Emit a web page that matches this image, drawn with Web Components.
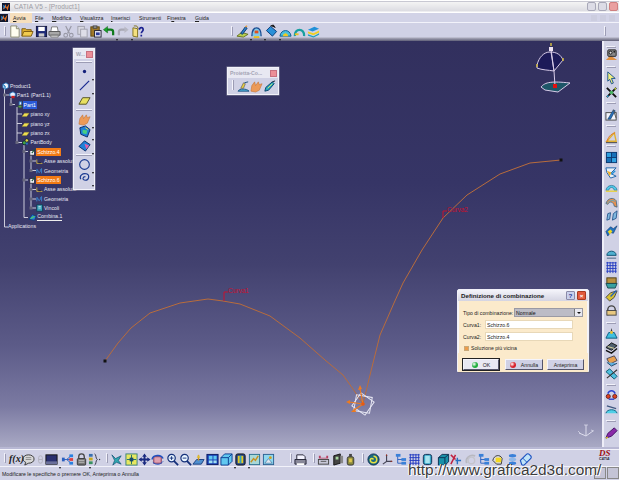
<!DOCTYPE html>
<html lang="it">

<head>
	<meta charset="UTF-8">
	<title>CATIA V5 - [Product1]</title>
	<style>
		html, body { margin: 0; padding: 0; background: #d0d1e5; }
		body { font: 5.2px "Liberation Sans", Arial, sans-serif; overflow: hidden; }
	</style>
</head>

<body>
	<cat-app></cat-app>
	<template id="app-content">
		<cat-viewport slot="viewport">
			<cat-tree></cat-tree>
			<cat-palette heading="W..." style="left:73px;top:7px;width:22px" items="point:72:d line:86:d plane:101 hand:120:d cubeA:132:d cubeB:146:d circle:165:d spiral:178:d" seps="62 110 155" vertical></cat-palette>
			<cat-palette heading="Proietta-Co..." style="left:227px;top:26px;width:52px" items="projA:243 hand:256 needle:269"></cat-palette>
			<cat-dialog heading="Definizione di combinazione" style="left:457px;top:248px">
				<cat-field label="Tipo di combinazione:" value="Normale" select></cat-field>
				<cat-field label="Curva1:" value="Schizzo.6"></cat-field>
				<cat-field label="Curva2:" value="Schizzo.4"></cat-field>
				<cat-check label="Soluzione più vicina"></cat-check>
				<div slot="buttons" style="display:contents">
					<cat-button led="#1fae3c" style="width:36px" focused>OK</cat-button>
					<cat-button led="#d8202a" style="width:38px;margin-left:6px">Annulla</cat-button>
					<cat-button style="width:37px;margin-left:4px">Anteprima</cat-button>
				</div>
			</cat-dialog>
		</cat-viewport>
	</template>

	<script>
		const ICONS = {
			new: `<path d="M3 1h6l3 3v9H3z" fill="#fffef0" stroke="#8a8a70"/><path d="M9 1v3h3" fill="#ddd" stroke="#8a8a70"/>`,
			open: `<path d="M1 12V4h4l1 1h5v2" fill="#e0b030" stroke="#7a5a10"/><path d="M1 12l2-5h10l-2 5z" fill="#f2cc50" stroke="#7a5a10"/>`,
			save: `<rect x="1.500" y="1.500" width="11" height="11" fill="#1e2a78" stroke="#10143c"/><rect x="3.500" y="2" width="7" height="4.500" fill="#fff"/><rect x="4" y="9" width="6" height="3.500" fill="#ccc"/>`,
			print: `<path d="M3 7l1-5h6l1 5" fill="#fff" stroke="#777"/><path d="M1 7h12v4H1z" fill="#a8a8a8" stroke="#555"/><path d="M3 11h8v2H3z" fill="#eee" stroke="#777"/>`,
			cut: `<path d="M4 1l4 8M10 1L6 9" stroke="#9a9aa8" stroke-width="1.300" fill="none"/><circle cx="4" cy="11" r="2" fill="none" stroke="#9a9aa8" stroke-width="1.200"/><circle cx="10" cy="11" r="2" fill="none" stroke="#9a9aa8" stroke-width="1.200"/>`,
			copy: `<rect x="2" y="1.500" width="7" height="8.500" fill="#d8d8e2" stroke="#a0a0ac"/><rect x="5" y="4.500" width="7" height="8.500" fill="#dedee8" stroke="#a0a0ac"/>`,
			paste: `<rect x="2" y="2" width="9" height="10" fill="#a07828" stroke="#5a4410"/><rect x="4.500" y="1" width="4" height="2.500" fill="#999" stroke="#444"/><rect x="6" y="6" width="7" height="7" fill="#e8e8f6" stroke="#223"/><rect x="7.500" y="8" width="4" height="3" fill="#2a3a98"/>`,
			undo: `<path d="M12 11V7.500A2.500 2.500 0 0 0 9.500 5H4" fill="none" stroke="#0f7a1c" stroke-width="2.400"/><path d="M6 1.500L1.500 5 6 8.500z" fill="#17a32a" stroke="#0c5a14" stroke-width=".5"/>`,
			redo: `<path d="M2 11V7.500A2.500 2.500 0 0 1 4.500 5H10" fill="none" stroke="#a8a8b4" stroke-width="2.400"/><path d="M8 1.500L12.500 5 8 8.500z" fill="#b8b8c4"/>`,
			help: `<path d="M1 3l5 1v9l-5-1z" fill="#f4e080" stroke="#807020"/><path d="M2 1h3l2 3" fill="none" stroke="#807020"/><path d="M8 5c0-3 4-3 4 0 0 2-2 2-2 4M10 10.500v2" fill="none" stroke="#1a2090" stroke-width="1.800"/>`,
			sketch: `<path d="M1 12l5-4 7 2-5 3z" fill="#b8d050" stroke="#667020"/><path d="M5 9l5-7 2 1.500L7 10z" fill="#2a80c8" stroke="#103a70"/><path d="M10 2l2-1" stroke="#e8a040" stroke-width="1.500"/>`,
			archA: `<path d="M2 12C2 5 5 3 7 3s5 2 5 9" fill="#80c8e8" stroke="#1a4a90" stroke-width="1.400"/><rect x="5" y="6" width="4" height="3" fill="#e05020"/><path d="M4 13h6" stroke="#e8c020" stroke-width="2"/>`,
			diamond: `<path d="M1.500 6L6 1.500 12.500 7 8 12z" fill="#2a90d8" stroke="#0a3a78"/><path d="M6 1l3-1 2 3" fill="#111" stroke="#111"/>`,
			archB: `<path d="M1 12C2 4 12 4 13 12z" fill="#48c0e0" stroke="#0a5a90"/><path d="M4 12c1-4 5-4 6 0z" fill="#f0c820"/>`,
			archC: `<path d="M2 12C1 3 13 3 12 12" fill="none" stroke="#18a0a0" stroke-width="2.500"/><path d="M2 10h4" stroke="#e8c020" stroke-width="2"/>`,
			stack: `<path d="M1 5l7-3 5 2-7 3z" fill="#2090d8"/><path d="M1 7l6 2 6-3v2l-6 3-6-2z" fill="#f0d020"/><path d="M1 10l6 2 6-3v1.500L7 13.500l-6-2z" fill="#20a0c0"/>`,
			bubble: `<path d="M7 2c3.500 0 6 1.800 6 4.500S10.500 11 7 11L3 13l1-3C2 9 1 8 1 6.500 1 3.800 3.500 2 7 2z" fill="#d8d8d8" stroke="#333"/><path d="M4 5h6M4 7h6" stroke="#8a8a8a"/>`,
			dim: `<rect x="5" y="3" width="4" height="8" rx="2" fill="none" stroke="#b0b0bc"/><path d="M5 7h4" stroke="#b0b0bc"/>`,
			square: `<rect x="1" y="2" width="12" height="10" fill="#2a3070" stroke="#111"/><rect x="1" y="9" width="12" height="3" fill="#6a6f9a"/>`,
			nodes: `<path d="M2 7h4M6 7l5-4M6 7l5 4M6 7h5" stroke="#2a60c0" fill="none"/><rect x="9" y="1.500" width="4" height="3" fill="#2a80e0"/><rect x="9" y="5.500" width="4" height="3" fill="#e04040"/><rect x="9" y="9.500" width="4" height="3" fill="#2a80e0"/><rect x="1" y="5" width="3" height="4" fill="#2a60c0"/>`,
			lock: `<path d="M4 6V4a3 3 0 0 1 6 0v2" fill="none" stroke="#444" stroke-width="1.400"/><rect x="2.500" y="6" width="9" height="7" rx="1" fill="#777" stroke="#333"/><path d="M4 8h6M4 10h6" stroke="#bbb"/>`,
			brace: `<rect x="1" y="1" width="4" height="3" fill="#3a70b0"/><rect x="1" y="5" width="4" height="3" fill="#c8a820"/><rect x="1" y="9" width="4" height="3" fill="#3a9060"/><path d="M7 1c2 0 1 5 3 6-2 1-1 6-3 6" fill="none" stroke="#334"/><circle cx="12.500" cy="7" r=".7" fill="#334"/>`,
			star: `<path d="M2 2l4 4 6-3-3 5 3 4-5-2-4 3 2-5z" fill="#30a8b0" stroke="#0a4a70" stroke-width=".7"/>`,
			fit: `<rect x="1" y="1" width="12" height="12" fill="#e8e860" stroke="#38807a"/><path d="M7 2v10M2 7h10" stroke="#1a6a6a"/><rect x="5" y="5" width="4" height="4" fill="#1a4a68"/>`,
			pan: `<path d="M7 .5L9.500 4H8v2h2V4.500L13.500 7 10 9.500V8H8v2h1.500L7 13.500 4.500 10H6V8H4v1.500L.5 7 4 4.500V6h2V4H4.500z" fill="#1a2a80"/>`,
			rotate: `<rect x="3" y="4" width="8" height="7" fill="#e0a0b0" stroke="#803050"/><path d="M1 7C2 2 11 1 13 6" fill="none" stroke="#2050c0" stroke-width="1.500"/><path d="M2 10c3 3 8 3 11-1" fill="none" stroke="#2050c0"/>`,
			zoomin: `<circle cx="6" cy="5.500" r="4" fill="#e8f4ff" stroke="#14307a" stroke-width="1.300"/><path d="M8.500 8.500L13 13" stroke="#14307a" stroke-width="2"/><path d="M4 5.500h4M6 3.500v4" stroke="#14307a"/>`,
			zoomout: `<circle cx="6" cy="5.500" r="4" fill="#e8f4ff" stroke="#14307a" stroke-width="1.300"/><path d="M8.500 8.500L13 13" stroke="#14307a" stroke-width="2"/><path d="M4 5.500h4" stroke="#14307a"/>`,
			normal: `<path d="M1 12l4-5h8l-3 5z" fill="#5090d0" stroke="#1a4080"/><path d="M7 8V2" stroke="#d09020" stroke-width="1.500"/><path d="M5 5l2-3 2 3z" fill="#e0c030"/>`,
			panes: `<rect x="1" y="1.500" width="12" height="11" fill="#1a40b8" stroke="#0a1a60"/><rect x="3" y="3" width="4" height="4" fill="#60c8f0"/><rect x="8" y="3" width="3.500" height="4" fill="#60c8f0"/><rect x="3" y="8" width="4" height="3" fill="#a0e0f0"/><rect x="8" y="8" width="3.500" height="3" fill="#a0e0f0"/>`,
			cube: `<path d="M1 5l4-4h8v8l-4 4H1z" fill="#60c8f0" stroke="#0a3a90"/><path d="M1 5h8v8M9 5l4-4" fill="none" stroke="#0a3a90"/>`,
			rainbow: `<rect x="2" y="1" width="10" height="12" rx="2" fill="#20408a" stroke="#111"/><rect x="4" y="3" width="6" height="8" fill="#e8c820"/><rect x="6" y="3" width="2" height="8" fill="#30a0c0"/>`,
			picA: `<rect x="1.500" y="1.500" width="11" height="11" fill="#a8d8d8" stroke="#2a7090"/><path d="M3 10l3-4 2 2 3-5" stroke="#c89020" stroke-width="1.500" fill="none"/>`,
			picB: `<rect x="1.500" y="1.500" width="11" height="11" fill="#90d8f0" stroke="#2a6090"/><path d="M3 11l4-5 4 5z" fill="#e0e8f0" stroke="#2a6090" stroke-width=".6"/><circle cx="9" cy="5" r="1.500" fill="#d0a020"/>`,
			printB: `<path d="M3 7V2h7l2 2v3" fill="#f4f4ff" stroke="#223"/><path d="M1 7h12v5H1z" fill="#889" stroke="#223"/><path d="M3 12h8" stroke="#fff" stroke-width="2"/>`,
			bar: `<path d="M2 3h2v2h6V3h2v3H2z" fill="#b84060"/><rect x="1.500" y="7" width="11" height="5" fill="#c8c8d8" stroke="#444"/><path d="M4 9h6" stroke="#555"/>`,
			dark: `<path d="M3 3l7-2v10l-7 2z" fill="#444" stroke="#111"/><rect x="5" y="4" width="3" height="3" fill="#a8d8a0"/><rect x="10" y="3" width="3" height="8" fill="#888"/>`,
			bottle: `<rect x="3.500" y="4" width="7" height="9" rx="2" fill="#8a8a40" stroke="#333"/><rect x="5.500" y="1" width="3" height="3" fill="#444"/><rect x="5.500" y="6" width="3" height="4" fill="#e0c850"/>`,
			swirl: `<circle cx="7" cy="7" r="6" fill="#1a6a80" stroke="#0a2a50"/><path d="M7 3.500a3.500 3.500 0 1 1-3.500 3.500A2 2 0 0 1 7 7" fill="none" stroke="#e8e040" stroke-width="1.600"/>`,
			logo: `<rect x="0" y="0" width="14" height="14" fill="#101830"/><path d="M1 12L6 2l2 6 5-7-3 12-3-5z" fill="#e87020"/><path d="M2 3l4 3-3 5z" fill="#2a90e0"/>`,
			axes: `<path d="M6 2v7L2 12M6 9h6" fill="none" stroke="#445" stroke-width="1.200"/><path d="M6 1l-1 2h2zM12.500 9l-2-1v2z" fill="#a03020"/>`,
			tree: `<path d="M4 3v8M4 7h5M4 11h5" fill="none" stroke="#2a60c0"/><rect x="2" y="1" width="5" height="3" fill="#3a80d8"/><rect x="8" y="5.500" width="5" height="3" fill="#3a80d8"/><rect x="8" y="9.500" width="5" height="3" fill="#3a80d8"/>`,
			grid: `<path d="M1.500 2h11M1.500 5h11M1.500 8h11M1.500 11h11M2.500 1v12M5.500 1v12M8.500 1v12M11.500 1v12" stroke="#2038c0"/>`,
			cyl: `<rect x="2.500" y="1.500" width="9" height="11" rx="2.500" fill="#38a8c8" stroke="#0a2a50"/><rect x="4.500" y="3" width="5" height="8" fill="#a8e4f0"/>`,
			cubeT: `<path d="M1.500 5l4-3.500h7v8l-4 3.500h-7z" fill="#1890a8" stroke="#0a3050"/><path d="M1.500 5h7v8M8.500 5l4-3.500" fill="none" stroke="#0a3050"/>`,
			mix: `<path d="M2 2l5 5M7 2L2 12" stroke="#c02040" stroke-width="1.600"/><path d="M7 8h6M9 5v7" stroke="#2a70c0" stroke-width="1.500"/>`,
			grayring: `<path d="M3 11C1 6 6 1 12 3" fill="none" stroke="#b8b8c0" stroke-width="2"/><circle cx="8" cy="8" r="3.500" fill="none" stroke="#c4c4cc" stroke-width="1.500"/>`,
			yellow: `<path d="M2 8C3 2 10 1 12 6l-1 6-5 0z" fill="#dcdce0" stroke="#333"/><path d="M5 5h6v5H5z" fill="#f4d820"/>`,
			dbl: `<ellipse cx="7" cy="3" rx="4" ry="1.800" fill="#3a80d8"/><ellipse cx="7" cy="7" rx="4" ry="1.800" fill="#8fb8e8"/><ellipse cx="7" cy="11" rx="4" ry="1.800" fill="#3a80d8"/>`,
			eraser: `<path d="M1.500 8L8 1.500a2 2 0 0 1 3 0l1.500 1.500a2 2 0 0 1 0 3L6 12.500a2 2 0 0 1-3 0z" fill="#c0e4f8" stroke="#1a50c0" stroke-width="1.200"/><path d="M4 5.500l4.500 4.500" stroke="#1a50c0"/>`,
			camera: `<path d="M1 13l5-5 7 5z" fill="#e09040"/><rect x="3" y="2" width="9" height="7" rx="1" fill="#888" stroke="#222"/><circle cx="6" cy="5" r="1.600" fill="#ddd" stroke="#111"/><circle cx="10" cy="4" r="1" fill="#222"/>`,
			cursor: `<path d="M3 1l8 7H7l2 5-2 .8L5 9l-2 2z" fill="#f0ee80" stroke="#18508a"/>`,
			spark: `<path d="M2 2l10 10M12 2L2 12" stroke="#111" stroke-width="2"/><circle cx="7" cy="7" r="2" fill="#48b060"/><circle cx="3" cy="11" r="1" fill="#38a0d0"/><circle cx="11" cy="3" r="1" fill="#c0d040"/>`,
			sketchB: `<rect x="1" y="5" width="11" height="8" fill="#f4f4fa" stroke="#444"/><path d="M3 12l6-10 2 1-5 9z" fill="#2870b8" stroke="#10305a" stroke-width=".6"/><path d="M9 2l3 9" stroke="#555"/>`,
			curveO: `<path d="M2 11L10 2l2 9z" fill="none" stroke="#e0b030" stroke-width="1.500"/><path d="M2 12C3 7 6 3 11 2" fill="none" stroke="#e07020"/><path d="M1 12.500h12" stroke="#555" stroke-width="1.200"/>`,
			quad: `<rect x="1" y="1" width="12" height="12" fill="#103a70"/><rect x="2" y="2" width="4.500" height="4.500" fill="#30a0e0"/><rect x="7.500" y="2" width="4.500" height="4.500" fill="#1870b8"/><rect x="2" y="7.500" width="4.500" height="4.500" fill="#1870b8"/><rect x="7.500" y="7.500" width="4.500" height="4.500" fill="#30a0e0"/>`,
			fold: `<path d="M1 2h11L6 8l6 3-6 2-4-6z" fill="#e8f0f8" stroke="#1a60a8"/><path d="M2 5l5 2-2 4z" fill="#f0b030"/><path d="M7 9l4-4" stroke="#2090d8" stroke-width="1.500"/>`,
			arcC: `<path d="M1 10C2 3 12 3 13 10l-3 0C9 6 5 6 4 10z" fill="#50c8e8" stroke="#1a6a90" stroke-width=".7"/><path d="M1 11h12" stroke="#e8d040" stroke-width="1.500"/>`,
			arcO: `<path d="M1 8C3 2 9 1 12 5l1 7-3-1C9 6 5 5 3 9z" fill="#e89050" stroke="#306080" stroke-width=".8"/><path d="M2 8c2-3 6-4 9-2" stroke="#50a8c8" fill="none"/>`,
			wings: `<path d="M2 12l1-7 3-1-1 7zM8 12l1-7 4-3-1 8z" fill="#80b8e0" stroke="#2a5a90"/>`,
			bolt: `<path d="M1 8l5-5 3 2 4-3-4 8-3-1-3 4z" fill="#2070c0" stroke="#103a70" stroke-width=".7"/><path d="M3 8l3-2 2 2-3 3z" fill="#f0d820"/>`,
			plateT: `<path d="M2 9C2 3 12 3 12 9z" fill="#50b0d0" stroke="#0a5070"/><path d="M2 12h10" stroke="#406080"/>`,
			brown: `<rect x="2" y="2" width="10" height="6" fill="#b89040" stroke="#4a3a10"/><path d="M1 8h12l-2 5H3z" fill="#38a0a0" stroke="#1a4a50"/>`,
			pencilY: `<path d="M1 9l5-5 7-2-3 7-5 4z" fill="#d8c030" stroke="#444"/><path d="M6 8l6-6" stroke="#2060c0" stroke-width="1.500"/>`,
			grayO: `<path d="M3 12V6a4 4 0 0 1 8 0v1" fill="none" stroke="#444" stroke-width="1.500"/><rect x="2" y="7" width="10" height="5" fill="#e8c880" stroke="#444"/>`,
			cone: `<path d="M7 1l-1 4h2z" fill="#333"/><path d="M1 12l3-6h6l3 6z" fill="#40c0e0" stroke="#0a5a80"/><circle cx="7" cy="6" r="1.600" fill="#e8c030"/>`,
			stripes: `<path d="M1 7l6-5 6 3-6 5z" fill="#506070" stroke="#111"/><path d="M1 10l6 3 6-5" fill="none" stroke="#111" stroke-width="1.500"/><path d="M3 6l7 2" stroke="#e8e0a0"/>`,
			boxO: `<path d="M2 5l8-3 3 5-8 4z" fill="#e8a050" stroke="#445"/><path d="M2 9l5 4 6-3" fill="#60b0e0" stroke="#246"/>`,
			ribbon: `<path d="M1 5l4-3 8 8-3 3z" fill="#50c0e0" stroke="#0a5a70"/><path d="M13 3L2 12" stroke="#333" stroke-width="1.200"/>`,
			mech: `<circle cx="3.500" cy="8" r="2.200" fill="#e04020" stroke="#622"/><circle cx="10.500" cy="8" r="2.200" fill="#e04020" stroke="#622"/><path d="M3 5c2-4 6-4 8 0" fill="none" stroke="#2a40d0" stroke-width="1.600"/><path d="M4 11h6" stroke="#2a40d0" stroke-width="1.500"/>`,
			arch2: `<path d="M1 11C2 6 12 6 13 11" fill="#50d0e8" stroke="#0a6080"/><path d="M2 3l10 3" stroke="#405880" stroke-width="1.400"/>`,
			pen: `<path d="M1 13l2-5 7-6 3 3-6 6z" fill="#8a2aa8" stroke="#401060"/><path d="M1 13l2-1" stroke="#d8c020" stroke-width="1.500"/>`,
			point: `<circle cx="7" cy="7" r="1.800" fill="#14207a"/>`,
			line: `<path d="M2 12L12 2" stroke="#1a2a90" stroke-width="1.300"/>`,
			plane: `<path d="M1 11l4-7h8l-4 7z" fill="#e8e060" stroke="#505020"/>`,
			hand: `<path d="M1 12l1-6 3-4 1 4 3-4 1 3 3-1-3 7-4 2z" fill="#ec9a58" stroke="#c07030" stroke-width=".6"/>`,
			cubeA: `<path d="M2 3l6-2 5 4-3 8-7-3z" fill="#1e80d8" stroke="#0a2a68"/><path d="M5 5l5 1-1 4-4-1z" fill="#48d080"/><path d="M8 3l3 2" stroke="#e8e040"/>`,
			cubeB: `<path d="M1 8l6-6 6 4-5 7z" fill="#1e80d8" stroke="#0a2a68"/><path d="M7 5l5 2-3 4z" fill="#e060a8"/>`,
			circle: `<circle cx="7" cy="7" r="5.200" fill="none" stroke="#1a3a90" stroke-width="1.200"/>`,
			spiral: `<path d="M3 9c-2-4 2-7 6-6s3 7-1 7-3-4 0-4" fill="none" stroke="#1a3a90" stroke-width="1.200"/>`,
			projA: `<path d="M1 12c2-3 9-3 12 0z" fill="#50b8e0" stroke="#1a5080"/><path d="M4 9l3-6 2 1-2 5z" fill="#e8d040" stroke="#445" stroke-width=".6"/><path d="M8 3l4-1" stroke="#1a5080"/>`,
			needle: `<path d="M2 12l1-4 7-6 2 2-6 7z" fill="#20a8c0" stroke="#0a4068"/><path d="M5 9l5-5" stroke="#e8e060"/><path d="M10 2l3-1" stroke="#123"/>`,
			pProduct: `<path d="M1 3l4-2 3 2v4L4 9 1 7z" fill="#f0f4ff" stroke="#1a70b8"/><path d="M1 3l3 2v4" fill="#50a8e0" stroke="#1a70b8"/>`,
			pPart: `<path d="M1 3l4-2 3 2v3L4 8 1 6z" fill="#e8f0ff" stroke="#1a70b8"/><path d="M3 6h4v3H3z" fill="#d02020"/>`,
			pPart2: `<path d="M2 7l3-2 3 2-3 2z" fill="#60a040" stroke="#354"/><path d="M4 5V1h3v3" fill="#e8f0ff" stroke="#1a70b8"/>`,
			pPlane: `<path d="M0 8l3-4h6L6 8z" fill="#f0e050" stroke="#8a8030" stroke-width=".5"/>`,
			pBody: `<circle cx="3" cy="6" r="2.500" fill="#40a040" stroke="#123"/><circle cx="6" cy="3" r="2.200" fill="#e0d040" stroke="#123"/><circle cx="6" cy="7" r="1.500" fill="#2a70c0"/>`,
			pSketch: `<rect x="1" y="3" width="6" height="6" fill="#f0f0f8" stroke="#223"/><path d="M3 6l4-5 1 1-4 5z" fill="#1a5a38"/>`,
			pAxis: `<path d="M1 3v5h7" fill="none" stroke="#e0c040"/><path d="M3 7h3" stroke="#223" stroke-width="1.500"/>`,
			pGeom: `<path d="M1 8V3c2 0 1 4 3 4s1-5 3-5v6" fill="none" stroke="#3a90e0" stroke-width="1"/>`,
			pCons: `<rect x="1" y="1" width="7" height="8" fill="#38a0b8" stroke="#103a50"/><path d="M3 3h3M3 5h3" stroke="#e0f0f0"/>`,
			pComb: `<path d="M0 8l4-6 5 2-2 5z" fill="#2a80d8" stroke="#0a3a78"/><path d="M2 7l5-3" stroke="#50d060" stroke-width="1.500"/>`
		};

		class ShadowElement extends HTMLElement {
			constructor() {
				super();
				this.attachShadow({ mode: "open" });
			}
		}

		customElements.define("cat-icon", class extends ShadowElement {
			connectedCallback() {
				const size = this.getAttribute("size") || 13;
				const box = this.getAttribute("box") || "0 0 14 14";
				this.shadowRoot.innerHTML = `<style>
					:host { display: block; position: relative; width: ${size}px; height: ${size}px; flex: none; }
					svg { display: block; width: 100%; height: 100%; overflow: visible; filter: blur(.3px); }
					i { position: absolute; right: -3px; bottom: -3px; border: 1.500px solid transparent; border-top: 2px solid #111; border-bottom: 0; }
				</style><svg viewBox="${box}">${ICONS[this.getAttribute("name")] || ""}</svg>${this.hasAttribute("drop") ? "<i></i>" : ""}`;
			}
		});

		// "name:pos:d" list, pos is the icon centre along the bar in page pixels
		function iconRun(items, start, vertical) {
			let prev = start, html = "";
			for (const item of items.trim().split(/\s+/)) {
				const [name, pos, drop] = item.split(":");
				const gap = +pos - 6.5 - prev;
				prev = +pos + 6.5;
				html += `<cat-icon name="${name}" style="margin-${vertical ? "top" : "left"}:${gap}px" ${drop ? "drop" : ""}></cat-icon>`;
			}
			return html;
		}

		customElements.define("cat-toolbar", class extends ShadowElement {
			connectedCallback() {
				const vertical = this.hasAttribute("vertical");
				this.shadowRoot.innerHTML = `<style>
					:host { display: flex; flex-direction: ${vertical ? "column" : "row"}; align-items: center; box-sizing: border-box; background: #d0d1e5; }
				</style>${iconRun(this.getAttribute("items"), +this.getAttribute("start") || 0, vertical)}<slot></slot>`;
			}
		});

		customElements.define("cat-grip", class extends ShadowElement {
			connectedCallback() {
				this.shadowRoot.innerHTML = `<style>
					:host { position: absolute; background: #f2f2fa; box-shadow: 1px 1px 0 #9c9cb4; }
				</style>`;
			}
		});

		customElements.define("cat-app", class extends ShadowElement {
			connectedCallback() {
				this.shadowRoot.innerHTML = `<style>
					:host { display: grid; width: 619px; height: 480px; grid-template-rows: 13px 10px 18px 406px 19px 14px; grid-template-columns: 602px 17px; position: relative; overflow: hidden; font: 5.2px "Liberation Sans", Arial, sans-serif; color: #222; background: #d0d1e5; }
					.title { grid-column: 1 / 3; display: flex; align-items: center; background: linear-gradient(#fff 0 1px, #c8c8d2 1px 2px, #f4f4f4 2px, #dcdce2 11px, #fff 12px); color: #9c9ca4; font-size: 6.5px; font-weight: 700; letter-spacing: .1px; padding-left: 2px; }
					.title b { margin-left: 4px; font-weight: 400; }
					.win { margin-left: auto; display: flex; gap: 2px; padding-right: 1px; }
					.win span { box-sizing: border-box; width: 9px; height: 9px; border: 1px solid #a8a8b8; border-radius: 2px; background: #dcdce6; }
					.win span:last-child { background: #eaa0a0; border-color: #d08080; }
					.menu { grid-column: 1 / 3; display: grid; grid-template-columns: 10px 22px 17px 28px 31px 28px 28px 28px 1fr 28px; align-items: center; background: #d2d3e7; border-bottom: 1px solid #f2f2fa; color: #222; }
					.menu span { padding-left: 3px; }
					.menu span.on { background: #f6dfbe; height: 100%; line-height: 10px; }
					.menu u { text-decoration: underline; text-underline-offset: .6px; }
					.mdi { grid-column: 10; display: flex; gap: 3px; opacity: .5; }
					.mdi i { width: 6px; height: 6px; background: #c8c8d8; }
					.top { grid-column: 1 / 3; height: 18px; background: linear-gradient(#d0d1e5 0 14px, #a8a8b8 15px, #5f5f78 18px); position: relative; align-items: flex-start; padding-top: 2px; }
					.right { width: 17px; height: 406px; border-left: 2px solid #eeeef8; position: relative; }
					.bottom { grid-column: 1 / 3; height: 19px; position: relative; background: linear-gradient(#b8b8d4 0 2px, #f2f2fa 2px 3px, #d0d1e5 3px); padding-top: 5px; }
					.status { grid-column: 1 / 3; display: flex; align-items: center; padding: 0 0 0 2px; color: #222; border-top: 1px solid #f2f2fa; box-sizing: border-box; }
					.logo { position: absolute; left: 599px; top: 3px; font: italic 700 9px "Liberation Serif", serif; color: #a01010; line-height: 7px; }
					.logo small { display: block; font: italic 700 3.500px "Liberation Sans", sans-serif; color: #223; line-height: 4px; }
					.fx { position: absolute; left: 9px; top: 5px; font: italic 700 10px "Liberation Serif", serif; color: #222; line-height: 13px; }
					.mark { position: absolute; left: 408px; top: 462px; font: 15.400px/16px "Liberation Sans", sans-serif; color: #3c3c3c; text-shadow: 1px 1px 0 #fff, -1px 0 0 #fff; white-space: nowrap; }
					.tray { position: absolute; right: 0; top: 467px; display: flex; gap: 1px; }
					.tray span { width: 12px; height: 12px; border: 1px solid #888; background: #c4c4d6; box-sizing: border-box; }
				</style>
				<div class="title"><cat-icon name="logo" size="8"></cat-icon><b>CATIA V5 - [Product1]</b><div class="win"><span></span><span></span><span></span></div></div>
				<div class="menu"><cat-icon name="logo" size="8"></cat-icon><span class="on"><u>A</u>vvia</span><span><u>F</u>ile</span><span><u>M</u>odifica</span><span><u>V</u>isualizza</span><span><u>I</u>nserisci</span><span>Strumenti</span><span>Fi<u>n</u>estra</span><span><u>G</u>uida</span><div class="mdi"><i></i><i></i><i></i></div></div>
				<cat-toolbar class="top" items="new:14 open:27 save:41 print:54 cut:68 copy:82 paste:95 undo:108:d redo:123:d help:138 sketch:242:d archA:256:d diamond:271:d archB:285 archC:299 stack:313"></cat-toolbar>
				<slot name="viewport"></slot>
				<cat-toolbar class="right" vertical start="41" items="camera:54:d cursor:77:d spark:92:d sketchB:114:d curveO:137 quad:157:d fold:172:d arcC:187:d arcO:202 wings:215:d bolt:230:d plateT:253:d grid:267:d brown:282:d pencilY:295:d grayO:310:d cone:333 stripes:347 boxO:360 ribbon:373 mech:395 arch2:409 pen:432"></cat-toolbar>
				<cat-toolbar class="bottom" items="bubble:28 dim:40 square:51:d nodes:67 lock:81:d brace:94 star:116 fit:131 pan:144 rotate:157 zoomin:172 zoomout:185 normal:198 panes:212 cube:226:d rainbow:240:d picA:254 picB:268 printB:300 bar:323 dark:337 bottle:350 swirl:373 axes:387 tree:400 grid:414 cyl:427 cubeT:443 mix:455 grayring:470 tree:483 yellow:497 dbl:512 eraser:525"><div class="fx">f(x)</div><div class="logo">DS<small>CATIA</small></div></cat-toolbar>
				<div class="status">Modificare le specifiche o premere OK, Anteprima o Annulla</div>
				<div class="tray"><span></span><span></span></div>
				<div class="mark">http://www.grafica2d3d.com/</div>`;
				this.append(document.getElementById("app-content").content.cloneNode(true));
				const sr = this.shadowRoot;
				// grip marks on the docked bars
				for (const [host, css] of [[".top", "left:4px;top:3px;width:1px;height:9px"], [".top", "left:231px;top:3px;width:1px;height:9px"], [".top", "left:604px;top:3px;width:1px;height:9px"],
					[".bottom", "left:4px;top:6px;width:1px;height:9px"], [".bottom", "left:106px;top:6px;width:1px;height:9px"], [".bottom", "left:290px;top:6px;width:1px;height:9px"], [".bottom", "left:313px;top:6px;width:1px;height:9px"], [".bottom", "left:362px;top:6px;width:1px;height:9px"],
					...[5, 25, 61, 84, 104, 281, 343, 379].map(y => [".right", `left:2px;top:${y}px;width:9px;height:1px`])]) {
					const grip = document.createElement("cat-grip");
					grip.style.cssText = css;
					sr.querySelector(host).append(grip);
				}
			}
		});

		customElements.define("cat-viewport", class extends ShadowElement {
			connectedCallback() {
				this.shadowRoot.innerHTML = `<style>
					:host { display: block; position: relative; width: 602px; height: 406px; overflow: hidden; background: linear-gradient(#32305e 0, #363566 35%, #42416f 55%, #5c5b88 75%, #7b7aa2 90%, #a9a9c4 100%); }
					svg { position: absolute; left: 0; top: 0; }
					text { font: 6.500px "Liberation Sans", sans-serif; fill: #c8102e; }
				</style>
				<svg width="602" height="406" viewBox="0 41 602 406" fill="none">
					<polyline points="105,361 118,343 131,328 150,313 180,303 208,299 223,301 240,304 270,316 300,338 325,360 343,375 353,389 363,404" stroke="#b86c3c"/>
					<polyline points="363,404 370,375 380,335 394,303 403,283 422,250 443,218 467,195 500,174 530,163 561,160" stroke="#b86c3c"/>
					<rect x="103.500" y="359.500" width="3" height="3" fill="#111"/><rect x="559.500" y="158.500" width="3" height="3" fill="#111"/>
					<path d="M224 301v-9h4M443 218v-7h4" stroke="#c8102e"/>
					<text x="228" y="292.500">Curva1</text><text x="447" y="211.500">Curva2</text>
					<g stroke="#e8e8f4"><rect x="355" y="396" width="16" height="16" transform="rotate(10 363 404)"/><rect x="355" y="396" width="16" height="16" transform="rotate(35 363 404)"/></g>
					<g stroke="#ec7a20" stroke-width="1.200"><path d="M363 404L360 389M363 404L349 402M363 404L354 410"/></g>
					<path d="M358 390l2-5 2 4zM350 400l-4 2 4 2zM355 408l-4 4 5 0z" fill="#ec7a20"/>
					<circle cx="363" cy="404" r="1.800" fill="#e85a10"/>
					<path d="M586 436V425M586 436L579 433M586 436L593 431" stroke="#dcdcec"/>
					<path d="M584 425h4M578 431l3 3M591 430l3 1" stroke="#dcdcec" stroke-width=".7"/>
					<!-- compass -->
					<path d="M541 87C545 82 552 81 570 83L558 92L545 90Z" fill="#1d5668" stroke="#d8cce8"/>
					<path d="M537 65C539 57 544 52 550 52C557 52 561 55 563 60L554 71C548 70 542 70 537 68Z" fill="#1c1a58" stroke="#d8cce8"/>
					<path d="M551 49L554 71L555 86M551 52L554 71" stroke="#d8cce8"/>
					<rect x="549" y="47" width="4" height="4" fill="#efe4f4"/><rect x="553" y="84" width="4" height="4" fill="#e01010"/>
					<path d="M551 43v3M537 64v3M563 58v3" stroke="#d0b840" stroke-width="1.500"/>
				</svg>
				<slot></slot>`;
			}
		});

		customElements.define("cat-tree-row", class extends ShadowElement {
			connectedCallback() {
				const level = +this.getAttribute("level");
				const mark = this.getAttribute("mark") || "";
				const marks = {
					orange: "background:#f27a14;color:#fff;padding:0 1px;margin-left:-1px",
					blue: "background:#2a5ad8;color:#fff;padding:0 1px;margin-left:-1px",
					under: "border-bottom:1px solid #eee;line-height:7px"
				};
				this.shadowRoot.innerHTML = `<style>
					:host { display: flex; align-items: center; height: 9.400px; padding-left: ${2 + level * 6.8}px; color: #e6e6f2; white-space: nowrap; }
					span { line-height: 8px; }
				</style><cat-icon name="${this.getAttribute("icon")}" size="8" box="0 0 10 10"></cat-icon><span style="${marks[mark] || ""}"><slot></slot></span>`;
			}
		});

		customElements.define("cat-tree", class extends ShadowElement {
			connectedCallback() {
				const rows = [
					[0, "pProduct", "Product1"], [1, "pPart", "Part1 (Part1.1)"], [2, "pPart2", "Part1", "blue"],
					[3, "pPlane", "piano xy"], [3, "pPlane", "piano yz"], [3, "pPlane", "piano zx"], [3, "pBody", "PartBody"],
					[4, "pSketch", "Schizzo.4", "orange"], [5, "pAxis", "Asse assoluto"], [5, "pGeom", "Geometria"],
					[4, "pSketch", "Schizzo.6", "orange"], [5, "pAxis", "Asse assoluto"], [5, "pGeom", "Geometria"], [5, "pCons", "Vincoli"],
					[4, "pComb", "Combina.1", "under"]
				];
				this.shadowRoot.innerHTML = `<style>
					:host { position: absolute; left: 0; top: 40.300px; width: 72px; }
					svg { position: absolute; left: 0; top: -81.300px; pointer-events: none; }
					.last { padding-left: 8px; height: 9.400px; line-height: 9.400px; color: #e6e6f2; }
				</style>
				<svg width="60" height="240" fill="none" stroke="#dcdce8" stroke-width=".9">
					<path d="M4.500 88V227H8M4.500 95H10M11 98V104.500H15M17 107V142.500M17 114H22M17 123.500H22M17 133H22M17 142.500H22M24 145V217.500H28M24 151.500H28M24 180H28M31 155V170.500H36M31 161H36M31 183V208H36M31 189.500H36M31 199H36"/>
					<g fill="#66667c" stroke="none"><rect x="3" y="93.500" width="3" height="3"/><rect x="9.500" y="103" width="3" height="3"/><rect x="15.500" y="141" width="3" height="3"/><rect x="22.500" y="150" width="3" height="3"/><rect x="22.500" y="178.500" width="3" height="3"/><rect x="29.500" y="159.500" width="3" height="3"/><rect x="29.500" y="169" width="3" height="3"/><rect x="29.500" y="188" width="3" height="3"/><rect x="29.500" y="197.500" width="3" height="3"/><rect x="29.500" y="206.500" width="3" height="3"/></g>
				</svg>
				${rows.map(([level, icon, text, mark]) => `<cat-tree-row level="${level}" icon="${icon}" mark="${mark || ""}">${text}</cat-tree-row>`).join("")}
				<div class="last">Applications</div>`;
			}
		});

		customElements.define("cat-palette", class extends ShadowElement {
			connectedCallback() {
				const vertical = this.hasAttribute("vertical");
				const top = 60;
				const seps = (this.getAttribute("seps") || "").trim().split(/\s+/).filter(Boolean);
				const body = vertical
					? iconRun(this.getAttribute("items"), top, true)
					: iconRun(this.getAttribute("items"), parseInt(this.style.left) + 1, false);
				this.shadowRoot.innerHTML = `<style>
					:host { position: absolute; display: block; box-sizing: border-box; background: #e8e8f2; border: 1px solid #f2f2fa; box-shadow: 0 0 0 .5px #8a8aa0; }
					.head { display: flex; align-items: center; justify-content: space-between; height: 10px; padding: 0 1px 0 2px; color: #a4a4b4; font-weight: 700; white-space: nowrap; overflow: hidden; }
					.head i { width: 7px; height: 7px; flex: none; box-sizing: border-box; background: #ec8f98; border: 1px solid #c87080; }
					.body { position: relative; display: flex; flex-direction: ${vertical ? "column" : "row"}; align-items: center; background: #d0d1e5; ${vertical ? "height: 130px;" : "height: 16px;"} }
					.sep { position: absolute; left: 2px; right: 2px; height: 1px; background: #f4f4fc; box-shadow: 0 1px 0 #9c9cb4; }
					.grip { position: absolute; left: 4px; top: 2px; width: 1px; height: 10px; background: #f4f4fc; box-shadow: 1px 0 0 #9c9cb4; }
				</style>
				<div class="head"><span>${this.getAttribute("heading")}</span><i></i></div>
				<div class="body">${vertical ? "" : `<div class="grip"></div>`}${seps.map(y => `<div class="sep" style="top:${+y - top}px"></div>`).join("")}${body}</div>`;
			}
		});

		customElements.define("cat-field", class extends ShadowElement {
			connectedCallback() {
				const select = this.hasAttribute("select");
				this.shadowRoot.innerHTML = `<style>
					:host { display: flex; align-items: center; height: 9px; margin-bottom: 3px; }
					label { width: ${select ? 51 : 22}px; flex: none; white-space: nowrap; }
					div { box-sizing: border-box; height: 9px; line-height: 8px; padding-left: 1px; display: flex; justify-content: space-between; }
					.input { width: 88px; background: #fff; border: 1px solid #e8d8b8; }
					.select { width: 69px; background: #bcbcc6; border: 1px solid #9a9aa4; color: #111; }
					i { width: 7px; height: 7px; background: #e8e8f0; border-left: 1px solid #777; position: relative; }
					i::after { content: ""; position: absolute; left: 1.500px; top: 2.500px; border: 2px solid transparent; border-top-color: #111; border-bottom: 0; }
				</style><label>${this.getAttribute("label")}</label><div class="${select ? "select" : "input"}">${this.getAttribute("value")}${select ? "<i></i>" : ""}</div>`;
			}
		});

		customElements.define("cat-check", class extends ShadowElement {
			connectedCallback() {
				this.shadowRoot.innerHTML = `<style>
					:host { display: flex; align-items: center; gap: 2px; height: 8px; margin-left: 1px; }
					i { width: 5px; height: 5px; background: #ec9c4c; border: 1px solid #c8a878; box-sizing: border-box; }
				</style><i></i><span>${this.getAttribute("label")}</span>`;
			}
		});

		customElements.define("cat-button", class extends ShadowElement {
			connectedCallback() {
				const led = this.getAttribute("led");
				this.shadowRoot.innerHTML = `<style>
					:host { display: flex; align-items: center; justify-content: center; gap: 5px; box-sizing: border-box; height: 11px; background: #d0d1e5; color: #222; border: 1px solid #f4f4fc; border-right-color: #55556a; border-bottom-color: #55556a; ${this.hasAttribute("focused") ? "outline: 1px solid #222; background: #e8e8f2;" : ""} }
					i { width: 6px; height: 6px; border-radius: 50%; background: radial-gradient(circle at 35% 35%, #fff, ${led} 50%); }
				</style>${led ? "<i></i>" : ""}<slot></slot>`;
			}
		});

		customElements.define("cat-dialog", class extends ShadowElement {
			connectedCallback() {
				this.shadowRoot.innerHTML = `<style>
					:host { position: absolute; display: block; box-sizing: border-box; width: 132px; height: 83px; background: #d8d9e8; border: 1px solid #f0f0f8; border-radius: 2px 2px 0 0; box-shadow: 1px 1px 0 #666680; color: #222; }
					.head { display: flex; align-items: center; height: 11px; padding-left: 3px; font-weight: 700; font-size: 6.200px; color: #222; background: linear-gradient(#f4f4fa, #d4d4e2); }
					.head b { margin-right: auto; }
					.head span { box-sizing: border-box; width: 9px; height: 9px; margin-right: 2px; border: 1px solid #8a8aa8; border-radius: 1px; background: #c8d0ec; color: #24348c; text-align: center; line-height: 7px; font-weight: 700; }
					.head span.x { background: #e25a3c; color: #fff; border-color: #a83a20; }
					.body { background: #fbeacb; padding: 7px 4px 0; height: 45px; border-left: 1px solid #f4f4fa; border-right: 1px solid #f4f4fa; }
					.foot { background: #fbeacb; display: flex; padding: 6px 0 0 5px; height: 19px; box-sizing: border-box; }
				</style>
				<div class="head"><b>${this.getAttribute("heading")}</b><span>?</span><span class="x">×</span></div>
				<div class="body"><slot></slot></div>
				<div class="foot"><slot name="buttons"></slot></div>`;
			}
		});
	</script>
</body>

</html>
